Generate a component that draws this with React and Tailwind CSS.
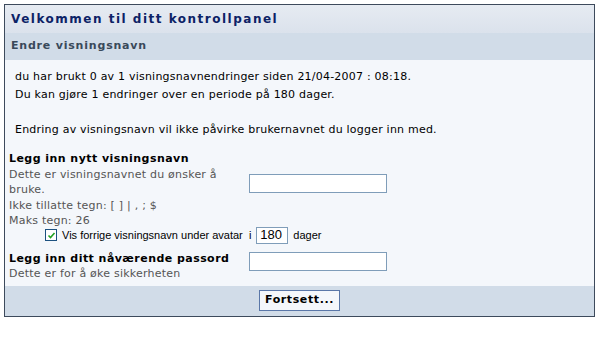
import React from "react";

const font = { fontFamily: '"DejaVu Sans", Verdana, sans-serif' };

export default function App() {
  return (
    <div className="w-[597px] h-[350px] bg-white pt-[4px] pl-[4px]" style={font}>
      <div className="w-[591px] border border-[#3d4a5c] bg-[#f4f7fb]">
        <div className="h-[28px] flex items-center pl-[6px] bg-gradient-to-b from-[#e6ebf2] to-[#dbe2ec] text-[12px] font-bold tracking-[1.5px] text-[#0c2266]">
          Velkommen til ditt kontrollpanel
        </div>
        <div className="h-[27px] flex items-center pl-[6px] bg-[#d1dce8] text-[11px] font-bold tracking-[0.8px] text-[#39495a]">
          Endre visningsnavn
        </div>

        <div className="pl-[10px] pt-[8px] text-[11px] leading-[18px] tracking-[0.22px] text-black">
          <p>du har brukt 0 av 1 visningsnavnendringer siden 21/04-2007 : 08:18.</p>
          <p>Du kan gjøre 1 endringer over en periode på 180 dager.</p>
          <p className="mt-[17px]">Endring av visningsnavn vil ikke påvirke brukernavnet du logger inn med.</p>
        </div>

        <div className="pl-[4px] pt-[12px] text-[11px] tracking-[0.22px]">
          <div className="flex">
            <div className="w-[240px] leading-[15.5px]">
              <div className="font-bold text-black tracking-[0.45px]">Legg inn nytt visningsnavn</div>
              <div className="text-[#555]">Dette er visningsnavnet du ønsker å bruke.</div>
              <div className="text-[#555]">Ikke tillatte tegn: [ ] | , ; $</div>
              <div className="text-[#555]">Maks tegn: 26</div>
            </div>
            <div className="pt-[23px]">
              <div className="w-[138px] h-[19px] bg-white border border-[#7f9db9]" />
            </div>
          </div>
          <div className="flex items-center h-[17px] -mt-[2px] pl-[36px] text-[11px] tracking-normal text-black" style={{ fontFamily: '"Liberation Sans", Arial, sans-serif' }}>
            <span className="w-[12px] h-[12px] border border-[#1c5180] bg-white flex items-center justify-center mr-[5px]">
              <svg width="9" height="9" viewBox="0 0 9 9"><path d="M1.5 4.5 L3.5 6.5 L7.5 2" stroke="#21a121" strokeWidth="1.6" fill="none" /></svg>
            </span>
            <span>Vis forrige visningsnavn under avatar&nbsp; i</span>
            <span className="ml-[5px] w-[32px] h-[17px] border border-[#7f9db9] bg-white flex items-center pl-[3px] text-[13px]">180</span>
            <span className="ml-[5px]">dager</span>
          </div>

          <div className="flex mt-[7px] pb-[5px]">
            <div className="w-[240px] leading-[15px]">
              <div className="font-bold text-black tracking-[0.45px]">Legg inn ditt nåværende passord</div>
              <div className="text-[#555]">Dette er for å øke sikkerheten</div>
            </div>
            <div className="pt-[1px]">
              <div className="w-[138px] h-[19px] bg-white border border-[#7f9db9]" />
            </div>
          </div>
        </div>

        <div className="h-[30px] bg-[#d1dce8] flex items-center justify-center">
          <button className="h-[21px] px-[5px] border border-[#5a77a8] bg-[#f4f7fb] text-[11px] font-bold text-black tracking-[0.6px]" style={font}>
            Fortsett...
          </button>
        </div>
      </div>
    </div>
  );
}
